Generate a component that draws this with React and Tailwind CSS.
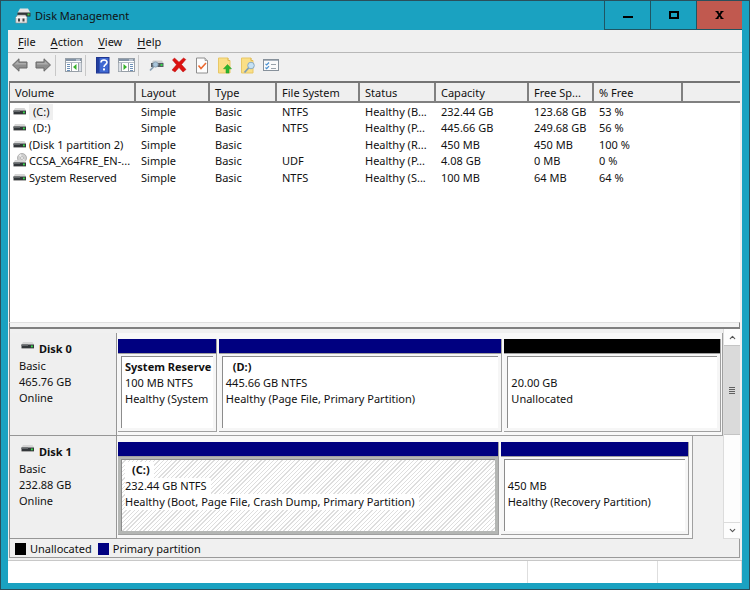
import React from "react";
import { ChevronUp, ChevronDown } from "lucide-react";

const volumes = [
  { name: "(C:)", fs: "NTFS", status: "Healthy (B...", cap: "232.44 GB", free: "123.68 GB", pct: "53 %", indent: true, selected: true },
  { name: "(D:)", fs: "NTFS", status: "Healthy (P...", cap: "445.66 GB", free: "249.68 GB", pct: "56 %", indent: true },
  { name: "(Disk 1 partition 2)", fs: "", status: "Healthy (R...", cap: "450 MB", free: "450 MB", pct: "100 %" },
  { name: "CCSA_X64FRE_EN-...", fs: "UDF", status: "Healthy (P...", cap: "4.08 GB", free: "0 MB", pct: "0 %", disc: true },
  { name: "System Reserved", fs: "NTFS", status: "Healthy (S...", cap: "100 MB", free: "64 MB", pct: "64 %" },
];

const columns = [
  ["Volume", "w-[126px]"],
  ["Layout", "w-[74px]"],
  ["Type", "w-[67px]"],
  ["File System", "w-[83px]"],
  ["Status", "w-[76px]"],
  ["Capacity", "w-[93px]"],
  ["Free Sp...", "w-[65px]"],
  ["% Free", "w-[89px]"],
  ["", ""],
];

function DriveIcon({ disc }) {
  return (
    <svg className="block shrink-0" width="14" height="16" viewBox="0 0 14 16" aria-hidden="true">
      {disc && (
        <g>
          <circle cx="9" cy="5" r="4.5" fill="#cfcfcf" stroke="#a2a2a2" strokeWidth="0.8" />
          <path d="M9 5 5.5 2.5 8 1Z M9 5l3.5 2.5L10 9Z" fill="#ececec" />
          <circle cx="9" cy="5" r="1.4" fill="#fff" stroke="#999" strokeWidth="0.6" />
        </g>
      )}
      <g transform={disc ? "translate(0 3)" : ""}>
        <path d="M2 4h9.500l1.500 2.500H0.500z" fill="#d6d6d6" />
        <path d="M0.500 6.500H13V10H0.500z" fill="#33373a" />
        <path d="M0.500 6.500H7V8H0.500z" fill="#64686b" />
        <path d="M0.500 10H13v0.800H0.500z" fill="#9a9a9a" />
        <rect x="10" y="7.500" width="1.800" height="1.800" fill="#35e04a" />
      </g>
    </svg>
  );
}

function AppIcon() {
  return (
    <svg width="16" height="16" viewBox="0 0 16 16" aria-hidden="true">
      <path d="M5 0.500h8L15.500 5H2.500z" fill="#e4e4e4" />
      <path d="M2.500 4.500h13v4h-13z" fill="#303437" />
      <rect x="12.500" y="5.500" width="2" height="2" fill="#3ad04a" />
      <path d="M2.500 7h8l1.500 2.500V15H0.800V9.500z" fill="#e6e6e6" stroke="#8a8a8a" strokeWidth="0.600" />
      <path d="M3 10.500h2v3H3z M7.500 10.500h2v3h-2z" fill="#444" />
      <path d="M1 9.500h10.500" stroke="#fff" strokeWidth="0.800" />
    </svg>
  );
}

function Arrow({ right }) {
  return (
    <svg width="18" height="16" viewBox="0 0 18 16" aria-hidden="true">
      <g transform={right ? "translate(18 0) scale(-1 1)" : ""}>
        <path
          d="M1.500 8 8 1.800V5h8v6H8v3.200z"
          fill="#8e8e8e"
          stroke="#696969"
          strokeLinejoin="round"
        />
        <path d="M3 8 7.200 4V6H15v1.500H3.500z" fill="#adadad" />
      </g>
    </svg>
  );
}

function PaneIcon({ flip }) {
  return (
    <svg width="17" height="16" viewBox="0 0 17 16" aria-hidden="true">
      <rect x="0.5" y="1.5" width="16" height="13" fill="#fff" stroke="#98a0a8" />
      <rect x="1" y="2" width="15" height="2" fill="#8293a6" />
      <path d="M11 3h4" stroke="#e8eef5" />
      <path d="M1 5.500h15" stroke="#b3bcc6" />
      <g transform={flip ? "translate(17 0) scale(-1 1)" : ""}>
        <path d="M6.500 6v8.500M13.500 6v8.500" stroke="#98a0a8" />
        <rect x="14" y="6" width="2.300" height="8.300" fill="#dbe0e6" />
        <path d="M2 7.500h3M2 9.500h3M2 11.500h3M2 13.500h3" stroke="#6c90b8" />
        <path d="M8 10 11.500 7v6z" fill="#35b22a" />
      </g>
    </svg>
  );
}

function HelpIcon() {
  return (
    <svg width="14" height="18" viewBox="0 0 14 18" aria-hidden="true">
      <rect x="0.5" y="1.500" width="12.500" height="15.500" fill="#3f68d2" stroke="#1e348f" />
      <path d="M1 2h2.500v14.500H1z" fill="#223f9f" />
      <path d="M5 6.500C5 3.200 11 3.200 11 6.300 11 8.700 8 8.700 8 11" fill="none" stroke="#fff" strokeWidth="1.600" />
      <rect x="7" y="12.400" width="2" height="2" fill="#fff" />
    </svg>
  );
}

function ConnectIcon() {
  return (
    <svg width="17" height="16" viewBox="0 0 17 16" aria-hidden="true">
      <path d="M5 3.500h9L15.500 6H3.500z" fill="#c9cdd0" />
      <rect x="3" y="6" width="12.500" height="4" fill="#555c62" />
      <rect x="12.500" y="7" width="2" height="2" fill="#35d84a" />
      <circle cx="7.500" cy="7.500" r="2.600" fill="#a9c6dc" stroke="#8ca2b4" />
      <path d="M5.500 9.800 2 13.500" stroke="#8ca2b4" strokeWidth="1.800" />
    </svg>
  );
}

function DeleteIcon() {
  return (
    <svg width="16" height="16" viewBox="0 0 16 16" aria-hidden="true">
      <path d="M3.500 1 8 5.200 12.500 1 14.800 2.500 10.500 7.500 15 12.500 12 15 8 10.500 4 15 1 13 5.500 7.800 1.500 3z" fill="#dc1210" stroke="#b80c0c" strokeWidth="0.500" />
    </svg>
  );
}

function CheckPageIcon() {
  return (
    <svg width="14" height="17" viewBox="0 0 14 17" aria-hidden="true">
      <path d="M1.500 1h8.500l2.500 2.500V16h-11z" fill="#fdfdfd" stroke="#8e8e8e" />
      <path d="M10 1v2.500h2.500" fill="#ddd" stroke="#8e8e8e" strokeWidth="0.800" />
      <path d="m3.500 8.500 2.500 3 5-5.500" fill="none" stroke="#ec6a30" strokeWidth="1.600" />
    </svg>
  );
}

function NoteIcon({ search }) {
  return (
    <svg width="16" height="17" viewBox="0 0 16 17" aria-hidden="true">
      <path d="M1.500 1H11v2.500h2V16H1.500z" fill="#fadf86" stroke="#e8c766" />
      <path d="M11 1v2.500h2" fill="none" stroke="#d9b552" strokeWidth="0.800" />
      {search ? (
        <g>
          <circle cx="11" cy="8.500" r="3.300" fill="#c5e2f5" stroke="#8ba9c0" />
          <path d="m8.500 11-4 4.500" stroke="#7d9db5" strokeWidth="1.800" />
        </g>
      ) : (
        <path d="M10.500 7.500l4 4.300H12V16H9v-4.200H6.500z" fill="#2cb52c" stroke="#1f9a28" strokeWidth="0.500" />
      )}
    </svg>
  );
}

function ListIcon() {
  return (
    <svg width="16" height="14" viewBox="0 0 16 14" aria-hidden="true">
      <rect x="0.5" y="1.500" width="15" height="11" fill="#fbfbfb" stroke="#87919b" />
      <path d="M1 2.500h14" stroke="#a9b3bd" />
      <path d="m2.500 5.800 1.200 1.200L6 4.500M2.500 9.500l1.200 1.200L6 8.200" fill="none" stroke="#4a90d0" strokeWidth="1.200" />
      <path d="M8 6.500h5M8 10.500h5" stroke="#9aa3ab" />
    </svg>
  );
}

function ToolButton({ label, children }) {
  return (
    <button type="button" aria-label={label} className="flex h-[22px] w-[22px] shrink-0 items-center justify-center">
      {children}
    </button>
  );
}

function Divider() {
  return <div className="mr-[5px] h-[21px] w-px shrink-0 bg-[#c8c8c8]" />;
}

function TitleBar() {
  return (
    <header className="flex h-[29px] shrink-0 items-center pl-[7px]">
      <AppIcon />
      <h1 className="flex-1 pl-1">Disk Management</h1>
      <div className="flex h-full border-b border-l border-[#1f5563]">
        <button type="button" aria-label="Minimize" className="flex w-[46px] items-center justify-center border-r border-[#1f5563]">
          <span className="mt-1 h-[2px] w-[10px] bg-black" />
        </button>
        <button type="button" aria-label="Maximize" className="flex w-[46px] items-center justify-center border-r border-[#1f5563]">
          <span className="h-[8px] w-[10px] border-2 border-black" />
        </button>
        <button type="button" aria-label="Close" className="flex w-[45px] items-center justify-center bg-[#c1594f]">
          <svg width="9" height="8" viewBox="0 0 9 8" aria-hidden="true">
            <path d="M2 .5 7 7.500M7 .5 2 7.500" stroke="#000" strokeWidth="1.800" />
            <path d="M.5.5h3M5.500.5h3M.5 7.500h3M5.500 7.500h3" stroke="#000" />
          </svg>
        </button>
      </div>
    </header>
  );
}

function MenuBar() {
  return (
    <nav className="flex h-[22px] shrink-0 items-center gap-[15px] pl-[10px] pt-px">
      {["File", "Action", "View", "Help"].map((m) => (
        <button key={m} type="button">
          <span className="underline underline-offset-2">{m[0]}</span>
          {m.slice(1)}
        </button>
      ))}
    </nav>
  );
}

function Toolbar() {
  return (
    <div className="flex h-[29px] shrink-0 items-center gap-px border-t border-[#b8b8b8] pb-1 pl-px">
      <ToolButton label="Back"><Arrow /></ToolButton>
      <ToolButton label="Forward"><Arrow right /></ToolButton>
      <Divider />
      <ToolButton label="Show or hide console tree"><PaneIcon /></ToolButton>
      <Divider />
      <ToolButton label="Help"><HelpIcon /></ToolButton>
      <ToolButton label="Show or hide action pane"><PaneIcon flip /></ToolButton>
      <Divider />
      <ToolButton label="Connect"><ConnectIcon /></ToolButton>
      <ToolButton label="Delete"><DeleteIcon /></ToolButton>
      <ToolButton label="Properties"><CheckPageIcon /></ToolButton>
      <ToolButton label="Up"><NoteIcon /></ToolButton>
      <ToolButton label="Find"><NoteIcon search /></ToolButton>
      <ToolButton label="Options"><ListIcon /></ToolButton>
    </div>
  );
}

function VolumeTable() {
  return (
    <div className="ml-px mr-[2px] flex min-h-0 flex-1 flex-col border-l border-t-2 border-[#747474] bg-white">
      <table className="w-full table-fixed border-separate border-spacing-0 text-left">
        <thead>
          <tr>
            {columns.map(([c, w], i) => (
              <th key={i} className={"h-[19px] border-b-2 border-[#808080] bg-[#efefef] p-0 pl-[5px] pt-[2px] font-normal " + (i < 8 ? "border-r-2 " : "") + w}>
                {c}
              </th>
            ))}
          </tr>
        </thead>
        <tbody>
          {volumes.map((v) => (
            <tr key={v.name} className="h-4 odd:h-[17px]">
              <td className="overflow-hidden whitespace-nowrap p-0 pl-[3px]">
                <div className="flex h-4 items-center gap-[2px]">
                  <DriveIcon disc={v.disc} />
                  <span className={(v.indent ? "pl-1 pr-[3px] " : "") + (v.selected ? "bg-[#efefef]" : "")}>{v.name}</span>
                </div>
              </td>
              {["Simple", "Basic", v.fs, v.status, v.cap, v.free, v.pct].map((t, i) => (
                <td key={i} className="whitespace-nowrap p-0 pl-[5px]">{t}</td>
              ))}
              <td className="p-0" />
            </tr>
          ))}
        </tbody>
      </table>
    </div>
  );
}

function Partition({ grow, name, size, status, color = "bg-[#000080]", selected }) {
  const label = selected ? "bg-white pr-1" : "";
  return (
    <section className={"flex min-w-0 flex-col " + grow}>
      <div className={"h-[15px] shrink-0 border-b border-r border-[#a0a0a0] " + color} />
      <div className={"flex-1 border-b border-r border-[#a0a0a0] px-[3px] pb-[3px] pt-[2px] " + (selected ? "bg-[#b4b6b4]" : "bg-[#f6f6f6]")}>
        <div
          className={
            "flex h-full flex-col items-start overflow-hidden whitespace-nowrap border-l border-t border-[#8c8c8c] pl-[3px] pt-[2px] leading-4 " +
            (selected
              ? "bg-[repeating-linear-gradient(135deg,#fff_0px,#fff_2px,#dedede_2px,#dedede_3px)]"
              : "bg-white")
          }
        >
          <div className={"h-4 shrink-0 font-bold " + (name && name[0] === "(" ? "pl-[7px] " : "") + (name ? label : "")}>{name}</div>
          <div className={label}>{size}</div>
          <div className={label}>{status}</div>
        </div>
      </div>
    </section>
  );
}

function Disk({ name, size, mapClass, children }) {
  return (
    <div className="flex h-[103px] shrink-0">
      <div className="w-[107px] shrink-0 border-b border-r border-[#969696] bg-[#efefef] pl-[9px] pt-[6px] leading-4">
        <div className="flex h-5 items-center gap-1 font-bold">
          <span className="pb-[6px] pl-[2px]"><DriveIcon /></span>
          <span>{name}</span>
        </div>
        <div className="-mt-px">Basic</div>
        <div>{size}</div>
        <div>Online</div>
      </div>
      <div className={"flex min-w-0 flex-1 gap-[2px] border-b border-r border-[#a0a0a0] bg-[#f8f8f8] pb-[3px] pl-px pt-[6px] " + mapClass}>
        {children}
      </div>
    </div>
  );
}

function DiskMap() {
  return (
    <div className="ml-px mr-[2px] flex shrink-0 border-l border-[#8a8a8a] bg-[#f0f0f0]">
      <div className="min-w-0 flex-1 pt-1">
        <Disk name="Disk 0" size="465.76 GB" mapClass="pr-px">
          <Partition grow="flex-[99]" name="System Reserve" size="100 MB NTFS" status="Healthy (System" />
          <Partition grow="flex-[284]" name="(D:)" size="445.66 GB NTFS" status="Healthy (Page File, Primary Partition)" />
          <Partition grow="flex-[217]" size="20.00 GB" status="Unallocated" color="bg-black" />
        </Disk>
        <Disk name="Disk 1" size="232.88 GB" mapClass="mr-[30px] pr-[3px]">
          <Partition grow="flex-[380]" name="(C:)" size="232.44 GB NTFS" status="Healthy (Boot, Page File, Crash Dump, Primary Partition)" selected />
          <Partition grow="flex-[188]" size="450 MB" status="Healthy (Recovery Partition)" />
        </Disk>
      </div>
      <div className="flex w-[17px] shrink-0 flex-col border-l border-[#dcdcdc] bg-[#fdfdfd]">
        <button type="button" aria-label="Scroll up" className="flex h-4 items-center justify-center text-[#555]">
          <ChevronUp size={9} strokeWidth={3} />
        </button>
        <div className="flex h-[90px] flex-col items-center justify-center gap-px border-y border-[#c4c4c4] bg-[#dadada]">
          <span className="h-px w-[6px] bg-[#606060]" />
          <span className="h-px w-[6px] bg-[#606060]" />
          <span className="h-px w-[6px] bg-[#606060]" />
          <span className="h-px w-[6px] bg-[#606060]" />
        </div>
        <div className="flex-1" />
        <button type="button" aria-label="Scroll down" className="flex h-[17px] items-center justify-center border-y border-[#dcdcdc] text-[#555]">
          <ChevronDown size={9} strokeWidth={3} />
        </button>
      </div>
    </div>
  );
}

export default function App() {
  return (
    <div className="flex h-screen flex-col border border-[#2b4f5b] bg-[#1aa2c1] px-[7px] pb-[6px] font-['Noto_Sans','Open_Sans',sans-serif] text-[11px] leading-4 text-[#111]">
      <TitleBar />
      <main className="flex min-h-0 flex-1 flex-col bg-[#f0f0f0]">
        <MenuBar />
        <Toolbar />
        <VolumeTable />
        <div className="ml-px mr-[2px] h-[7px] shrink-0 border-b-2 border-l border-r border-t border-[#808080] border-t-[#e0e0e0] bg-[#f4f4f4]" />
        <DiskMap />
        <div className="ml-px mr-[2px] flex h-[19px] shrink-0 items-center border-b border-l border-r border-[#9a9a9a] pl-[5px] pt-px">
          <span className="h-3 w-[11px] bg-black" />
          <span className="pl-1">Unallocated</span>
          <span className="ml-[6px] h-3 w-[11px] bg-[#000080]" />
          <span className="pl-1">Primary partition</span>
        </div>
        <footer className="mt-[2px] flex h-[23px] shrink-0 border-t border-[#c8c8c8] bg-white">
          <div className="flex-1" />
          <div className="w-[130px] border-l border-[#dedede]" />
          <div className="w-[85px] border-l border-r border-[#dedede]" />
        </footer>
      </main>
    </div>
  );
}
